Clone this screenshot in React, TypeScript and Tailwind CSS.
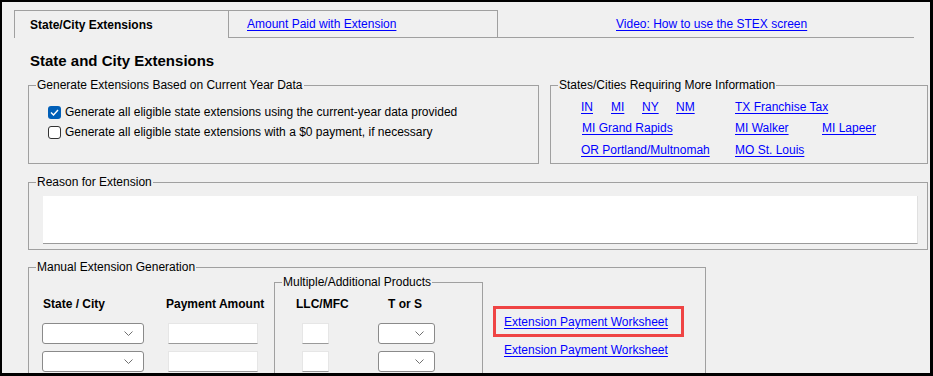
import React from "react";

const link = "text-[#0000ff] underline decoration-[1px] underline-offset-[2px] whitespace-nowrap";
const legend = "ml-[7px] px-[1px] leading-[14px]";

function Chevron() {
  return (
    <svg width="9" height="5" viewBox="0 0 9 5" className="ml-auto mr-[10px]">
      <path d="M0.5 0.5 L4.5 4.5 L8.5 0.5" fill="none" stroke="#707070" strokeWidth="1" />
    </svg>
  );
}

function Select({ w }: { w: string }) {
  return (
    <div className={`${w} h-[21px] flex items-center bg-white border border-[#8a8a8a] rounded-[3px]`}>
      <Chevron />
    </div>
  );
}

function TextBox({ w }: { w: string }) {
  return <div className={`${w} h-[21px] bg-white border border-[#e6e6e6] border-b-[#9a9a9a]`} />;
}

function Check({ checked }: { checked?: boolean }) {
  return checked ? (
    <span className="w-[13px] h-[13px] rounded-[3px] bg-[#005fb8] flex items-center justify-center">
      <svg width="9" height="7" viewBox="0 0 9 7">
        <path d="M1 3.5 L3.5 6 L8 1" fill="none" stroke="white" strokeWidth="1.4" />
      </svg>
    </span>
  ) : (
    <span className="w-[13px] h-[13px] rounded-[3px] bg-white border border-[#333]" />
  );
}

export default function App() {
  return (
    <div className="w-[933px] h-[376px] bg-black pt-[2px] pl-[2px] pr-[3px] pb-[3px] font-['Liberation_Sans',Arial,sans-serif] text-[12px] text-black">
      <div className="h-full bg-[#f0f0f0] overflow-hidden">
        {/* tabs */}
        <div className="flex ml-[12px] mr-[16px] mt-[8px] h-[28px]">
          <div className="w-[215px] border-l border-t border-r border-[#a0a0a0] pl-[15px] flex items-center font-bold">
            State/City Extensions
          </div>
          <div className="w-[269px] border-t border-r border-b border-[#a0a0a0] pl-[18px] flex items-center">
            <span className={link}>Amount Paid with Extension</span>
          </div>
          <div className="flex-1 border-b border-[#a0a0a0] pl-[118px] flex items-center">
            <span className={link}>Video: How to use the STEX screen</span>
          </div>
        </div>

        <div className="ml-[28px] mt-[14px] text-[15px] leading-[18px] font-bold">State and City Extensions</div>

        <div className="flex ml-[26px] mt-[8px]">
          <fieldset className="w-[511px] h-[86px] border border-[#a0a0a0]">
            <legend className={legend}>Generate Extensions Based on Current Year Data</legend>
            <div className="pl-[19px] pt-[10px]">
              <div className="flex items-center gap-[4px] h-[20px]">
                <Check checked />
                <span>Generate all eligible state extensions using the current-year data provided</span>
              </div>
              <div className="flex items-center gap-[4px] h-[20px]">
                <Check />
                <span>Generate all eligible state extensions with a $0 payment, if necessary</span>
              </div>
            </div>
          </fieldset>

          <fieldset className="w-[378px] h-[86px] ml-[11px] border border-[#a0a0a0]">
            <legend className={legend}>States/Cities Requiring More Information</legend>
            <div className="pl-[30px] pt-[4px]">
              <div className="flex items-center h-[21px]">
                <span className="w-[30px]"><span className={link}>IN</span></span>
                <span className="w-[31px]"><span className={link}>MI</span></span>
                <span className="w-[34px]"><span className={link}>NY</span></span>
                <span className="w-[59px]"><span className={link}>NM</span></span>
                <span className={link}>TX Franchise Tax</span>
              </div>
              <div className="flex items-center h-[22px]">
                <span className="w-[154px] pl-[1px]"><span className={link}>MI Grand Rapids</span></span>
                <span className="w-[87px]"><span className={link}>MI Walker</span></span>
                <span className={link}>MI Lapeer</span>
              </div>
              <div className="flex items-center h-[21px]">
                <span className="w-[154px]"><span className={link}>OR Portland/Multnomah</span></span>
                <span className={link}>MO St. Louis</span>
              </div>
            </div>
          </fieldset>
        </div>

        <fieldset className="ml-[26px] w-[900px] h-[75px] mt-[11px] border border-[#a0a0a0]">
          <legend className={legend}>Reason for Extension</legend>
          <div className="pl-[14px] pt-[7px]">
            <div className="w-[875px] h-[48px] bg-white border-b border-b-[#9a9a9a] border-r border-r-[#e0e0e0]" />
          </div>
        </fieldset>

        <fieldset className="ml-[26px] w-[678px] h-[130px] mt-[10px] border border-[#a0a0a0]">
          <legend className={legend}>Manual Extension Generation</legend>
          <div className="flex items-start">
            <div className="w-[245px] pl-[13px] pt-[21px]">
              <div className="flex h-[24px] items-start font-bold">
                <span className="w-[124px] pl-[1px]">State / City</span>
                <span>Payment Amount</span>
              </div>
              <div className="flex items-center h-[28px]">
                <Select w="w-[102px]" />
                <div className="ml-[24px]"><TextBox w="w-[90px]" /></div>
              </div>
              <div className="flex items-center h-[28px]">
                <Select w="w-[102px]" />
                <div className="ml-[24px]"><TextBox w="w-[90px]" /></div>
              </div>
            </div>

            <fieldset className="w-[209px] h-[120px] mt-[1px] border border-[#a0a0a0]">
              <legend className={legend}>Multiple/Additional Products</legend>
              <div className="pt-[6px]">
                <div className="flex h-[24px] items-start font-bold">
                  <span className="w-[92px] pl-[21px]">LLC/MFC</span>
                  <span className="pl-[21px]">T or S</span>
                </div>
                <div className="flex items-center h-[28px]">
                  <div className="ml-[27px]"><TextBox w="w-[27px]" /></div>
                  <div className="ml-[49px]"><Select w="w-[57px]" /></div>
                </div>
                <div className="flex items-center h-[28px]">
                  <div className="ml-[27px]"><TextBox w="w-[27px]" /></div>
                  <div className="ml-[49px]"><Select w="w-[57px]" /></div>
                </div>
              </div>
            </fieldset>

            <div className="ml-[10px] pt-[32px]">
              <div className="w-[191px] h-[31px] border-[3px] border-[#ef4444] pl-[8px] flex items-center">
                <span className={link}>Extension Payment Worksheet</span>
              </div>
              <div className="pl-[11px] h-[26px] flex items-center">
                <span className={link}>Extension Payment Worksheet</span>
              </div>
            </div>
          </div>
        </fieldset>
      </div>
    </div>
  );
}
